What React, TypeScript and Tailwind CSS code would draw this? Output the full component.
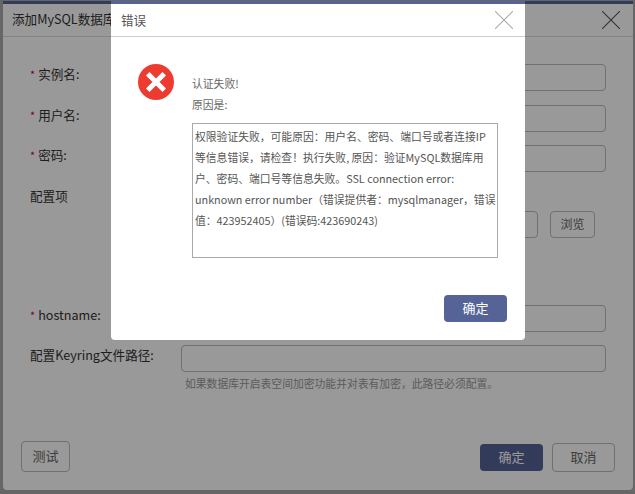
const font = { fontFamily: '"Noto Sans CJK SC", "Noto Sans", sans-serif' };

function Field({ label, required, children }: { label: string; required?: boolean; children?: React.ReactNode }) {
    return (
        <div className="flex items-start">
            <label className="w-[151px] shrink-0 text-[12.6px] leading-[20px] text-[#333]">
                {required && <span className="mr-[3px] text-[11px] text-[#d9001b]">*</span>}
                {label}
            </label>
            <div className="flex-1">{children}</div>
        </div>
    );
}

function TextBox() {
    return <div className="h-[27px] w-full rounded-[4px] border border-[#bbb] bg-white" />;
}

export default function App() {
    return (
        <div className="relative h-[494px] w-[635px] overflow-hidden bg-[#aaa] text-[13px]" style={font}>
            {/* Form behind the overlay */}
            <div className="absolute left-[3px] top-[1px] flex h-[489px] w-[630px] flex-col rounded-b-[4px] border-t-[3px] border-[#556396] bg-white">
                <div className="flex h-[33px] items-center justify-between border-b border-[#ddd] pb-px pl-[9px] pr-[13px]">
                    <span className="text-[12.6px] text-[#333]">添加MySQL数据库</span>
                    <svg viewBox="0 0 18 18" className="h-[18px] w-[18px] text-[#555]" fill="none" stroke="currentColor" strokeWidth="1.1">
                        <path d="M0 0 18 18M18 0 0 18" />
                    </svg>
                </div>
                <div className="flex flex-col pl-[27px] pr-[27px] pt-[27px]">
                    <div className="flex flex-col">
                        <Field label="实例名:" required><TextBox /></Field>
                        <div className="mt-[14px]"><Field label="用户名:" required><TextBox /></Field></div>
                        <div className="mt-[13px]"><Field label="密码:" required><TextBox /></Field></div>
                    </div>
                    <div className="mt-[14px] h-[119px]">
                        <Field label="配置项">
                            <div className="mt-[25px] flex items-center justify-end gap-[12px] pr-[11px]">
                                <div className="h-[27px] w-[60px] rounded-[4px] border border-[#bbb]" />
                                <button className="h-[27px] w-[45px] rounded-[4px] border border-[#bbb] pb-px text-[12px] text-[#666]">浏览</button>
                            </div>
                        </Field>
                    </div>
                    <div className="flex flex-col gap-[13px]">
                        <Field label="hostname:" required><TextBox /></Field>
                        <Field label="配置Keyring文件路径:">
                            <TextBox />
                            <p className="mt-[3px] pl-1 text-[10.8px] text-[#999]">如果数据库开启表空间加密功能并对表有加密，此路径必须配置。</p>
                        </Field>
                    </div>
                </div>
                <div className="mt-auto flex items-end justify-between pb-[18px] pl-[18px] pr-[18px]">
                    <button className="h-[31px] w-[49px] rounded-[4px] border border-[#bbb] pb-[2px] text-[13px] text-[#666]">测试</button>
                    <div className="flex items-center gap-[9px]">
                        <button className="h-[27px] w-[63px] rounded-[4px] bg-[#556396] pb-[2px] text-[13px] text-white">确定</button>
                        <button className="h-[29px] w-[63px] rounded-[4px] border border-[#bbb] pb-[2px] text-[13px] text-[#666]">取消</button>
                    </div>
                </div>
            </div>

            {/* Overlay */}
            <div className="absolute inset-0 bg-black/40" />

            {/* Error dialog */}
            <div className="absolute left-[111px] top-[1px] flex h-[339px] w-[414px] flex-col rounded-b-[4px] border-t-[3px] border-[#556396] bg-white">
                <div className="flex h-[33px] items-center justify-between border-b border-[#ccc] pl-[10px] pr-[12px]">
                    <span className="pt-px text-[12.6px] text-[#555]">错误</span>
                    <svg viewBox="0 0 18 18" className="h-[18px] w-[18px] text-[#aaa]" fill="none" stroke="currentColor" strokeWidth="1.1">
                        <path d="M0 0 18 18M18 0 0 18" />
                    </svg>
                </div>
                <div className="flex pl-[27px] pt-[27px]">
                    <svg viewBox="0 0 36 36" className="h-[36px] w-[36px] shrink-0">
                        <circle cx="18" cy="18" r="18" fill="#ee3b30" />
                        <path d="M11.5 11.5 24.5 24.5M24.5 11.5 11.5 24.5" stroke="#fff" strokeWidth="5" strokeLinecap="square" />
                    </svg>
                    <div className="ml-[18px] mt-[9px] text-[10.8px] text-[#666]">
                        <p className="leading-[21px]">认证失败!</p>
                        <p className="leading-[21px]">原因是:</p>
                        <div className="mt-[8px] h-[135px] w-[306px] border border-[#aaa] py-[2px] pl-[2px] pr-px text-[10.8px] leading-[21px] text-[#555]">
                            权限验证失败，可能原因：用户名、密码、端口号或者连接IP等信息错误，请检查！执行失败, 原因：验证MySQL数据库用户、密码、端口号等信息失败。SSL connection error: unknown error number（错误提供者：mysqlmanager，错误值：423952405）(错误码:423690243)
                        </div>
                    </div>
                </div>
                <div className="mt-auto flex justify-end pb-[18px] pr-[18px]">
                    <button className="h-[27px] w-[63px] rounded-[4px] bg-[#556396] pb-[2px] text-[13px] text-white">确定</button>
                </div>
            </div>
        </div>
    );
}
